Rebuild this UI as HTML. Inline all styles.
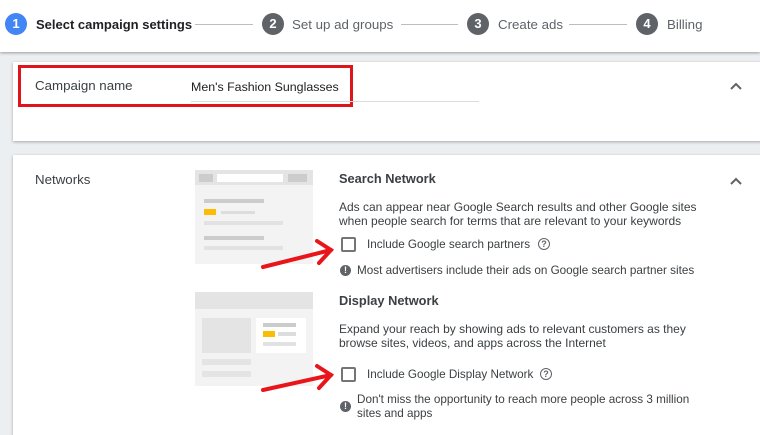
<!DOCTYPE html>
<html><head><meta charset="utf-8"><style>
*{margin:0;padding:0;box-sizing:border-box}
body{width:760px;height:428px;overflow:hidden;background:#eceff1;font-family:"Liberation Sans",Arial,sans-serif;position:relative;color:#202124}
.hdr{position:absolute;left:0;top:0;width:760px;height:52px;background:#fff;box-shadow:0 1px 3px rgba(0,0,0,.35)}
.a{position:absolute}
.circ{position:absolute;width:22px;height:22px;border-radius:50%;color:#fff;font-size:13px;font-weight:bold;text-align:center;line-height:22px;background:#5f6368}
.st{position:absolute;top:17px;font-size:13.3px;color:#5f6368}
.ln{position:absolute;top:24px;height:1px;background:#bdbdbd}
.card{position:absolute;left:13px;width:760px;background:#fff;box-shadow:0 1px 3px rgba(0,0,0,.3)}
.gb{position:absolute;background:#dadce0}
.lb{position:absolute;background:#ebebeb}
.t{position:absolute;font-size:12px;color:#3c4043;line-height:14px}
.s{font-size:11.7px}
.cb{position:absolute;width:15px;height:15px;border:2px solid #757575;border-radius:2px}
.q{position:absolute;width:12px;height:12px;border:1.3px solid #5f6368;border-radius:50%;font-size:9px;text-align:center;line-height:10px;color:#5f6368;font-weight:bold}
.ex{position:absolute;width:11px;height:11px;border-radius:50%;background:#5f6368;color:#fff;font-size:9px;font-weight:bold;text-align:center;line-height:11px}
</style></head><body>
<div class="hdr">
 <div class="circ" style="left:5px;top:13px;background:#4285f4">1</div>
 <div class="st" style="left:36px;color:#202124;font-weight:bold;font-size:13px">Select campaign settings</div>
 <div class="ln" style="left:195px;width:58px"></div>
 <div class="circ" style="left:262px;top:13px">2</div>
 <div class="st" style="left:292px">Set up ad groups</div>
 <div class="ln" style="left:401px;width:57px"></div>
 <div class="circ" style="left:467px;top:13px">3</div>
 <div class="st" style="left:498px">Create ads</div>
 <div class="ln" style="left:569px;width:58px"></div>
 <div class="circ" style="left:636px;top:13px">4</div>
 <div class="st" style="left:667px">Billing</div>
</div>

<div class="card" style="top:62px;height:79px"></div>
<div class="a" style="left:18px;top:65px;width:335px;height:42px;border:3px solid #e0151b"></div>
<div class="a" style="left:35px;top:78px;font-size:13.3px;color:#3c4043">Campaign name</div>
<div class="a" style="left:191px;top:80px;font-size:12.4px;color:#202124">Men's Fashion Sunglasses</div>
<div class="a" style="left:191px;top:101px;width:288px;height:1px;background:#dadce0"></div>
<svg class="a" style="left:729px;top:81px" width="14" height="10"><path d="M2 8 L7 3 L12 8" stroke="#5f6368" stroke-width="2" fill="none"/></svg>

<div class="card" style="top:155px;height:280px"></div>
<div class="a" style="left:35px;top:172px;font-size:13.3px;color:#3c4043">Networks</div>
<svg class="a" style="left:729px;top:176px" width="14" height="10"><path d="M2 8 L7 3 L12 8" stroke="#5f6368" stroke-width="2" fill="none"/></svg>

<div class="lb" style="left:195px;top:170px;width:118px;height:94px;background:#f3f3f3"></div>
<div class="lb" style="left:195px;top:170px;width:118px;height:15px;background:#e4e4e4"></div>
<div class="a" style="left:217px;top:174px;width:66px;height:8px;background:#fff"></div>
<div class="gb" style="left:288px;top:174px;width:19px;height:8px;background:#ccc"></div>
<div class="gb" style="left:199px;top:174px;width:14px;height:8px;background:#ccc"></div>
<div class="gb" style="left:204px;top:199px;width:60px;height:4px;background:#ccc"></div>
<div class="a" style="left:204px;top:209px;width:12px;height:6px;background:#fbbc04"></div>
<div class="lb" style="left:221px;top:211px;width:34px;height:3px;background:#ddd"></div>
<div class="lb" style="left:204px;top:221px;width:79px;height:4px;background:#e2e2e2"></div>
<div class="gb" style="left:204px;top:236px;width:60px;height:4px;background:#ccc"></div>
<div class="lb" style="left:204px;top:246px;width:79px;height:4px;background:#e2e2e2"></div>

<div class="lb" style="left:195px;top:292px;width:118px;height:94px;background:#f3f3f3"></div>
<div class="lb" style="left:195px;top:292px;width:118px;height:17px;background:#e4e4e4"></div>
<div class="lb" style="left:202px;top:318px;width:49px;height:35px;background:#e4e4e4"></div>
<div class="a" style="left:256px;top:318px;width:50px;height:35px;background:#fff"></div>
<div class="gb" style="left:263px;top:323px;width:33px;height:4px;background:#ccc"></div>
<div class="a" style="left:263px;top:331px;width:12px;height:6px;background:#fbbc04"></div>
<div class="lb" style="left:278px;top:332px;width:18px;height:4px;background:#ddd"></div>
<div class="lb" style="left:263px;top:342px;width:33px;height:4px;background:#e2e2e2"></div>
<div class="lb" style="left:202px;top:359px;width:49px;height:6px;background:#e4e4e4"></div>
<div class="lb" style="left:202px;top:371px;width:49px;height:6px;background:#e4e4e4"></div>

<div class="a" style="left:339px;top:171px;font-size:12.8px;font-weight:bold;color:#3c4043">Search Network</div>
<div class="t" style="left:339px;top:200px">Ads can appear near Google Search results and other Google sites<br>when people search for terms that are relevant to your keywords</div>
<div class="cb" style="left:341px;top:237px"></div>
<div class="t s" style="left:367px;top:238px">Include Google search partners</div>
<div class="q" style="left:538px;top:238px">?</div>
<div class="ex" style="left:340px;top:265px">!</div>
<div class="t s" style="left:357px;top:264px">Most advertisers include their ads on Google search partner sites</div>

<div class="a" style="left:339px;top:293px;font-size:12.8px;font-weight:bold;color:#3c4043">Display Network</div>
<div class="t" style="left:339px;top:322px">Expand your reach by showing ads to relevant customers as they<br>browse sites, videos, and apps across the Internet</div>
<div class="cb" style="left:341px;top:367px"></div>
<div class="t s" style="left:367px;top:368px">Include Google Display Network</div>
<div class="q" style="left:540px;top:368px">?</div>
<div class="ex" style="left:340px;top:401px">!</div>
<div class="t s" style="left:357px;top:393px">Don't miss the opportunity to reach more people across 3 million<br>sites and apps</div>

<svg class="a" style="left:255px;top:235px" width="85" height="160">
 <g stroke="#e8151b" stroke-width="4" fill="none" stroke-linecap="round">
  <path d="M8 32 L76 15"/><path d="M62 6 L76 15 L64 28"/>
  <path d="M8 155 L76 140"/><path d="M62 131 L76 140 L64 153"/>
 </g>
</svg>
</body></html>
